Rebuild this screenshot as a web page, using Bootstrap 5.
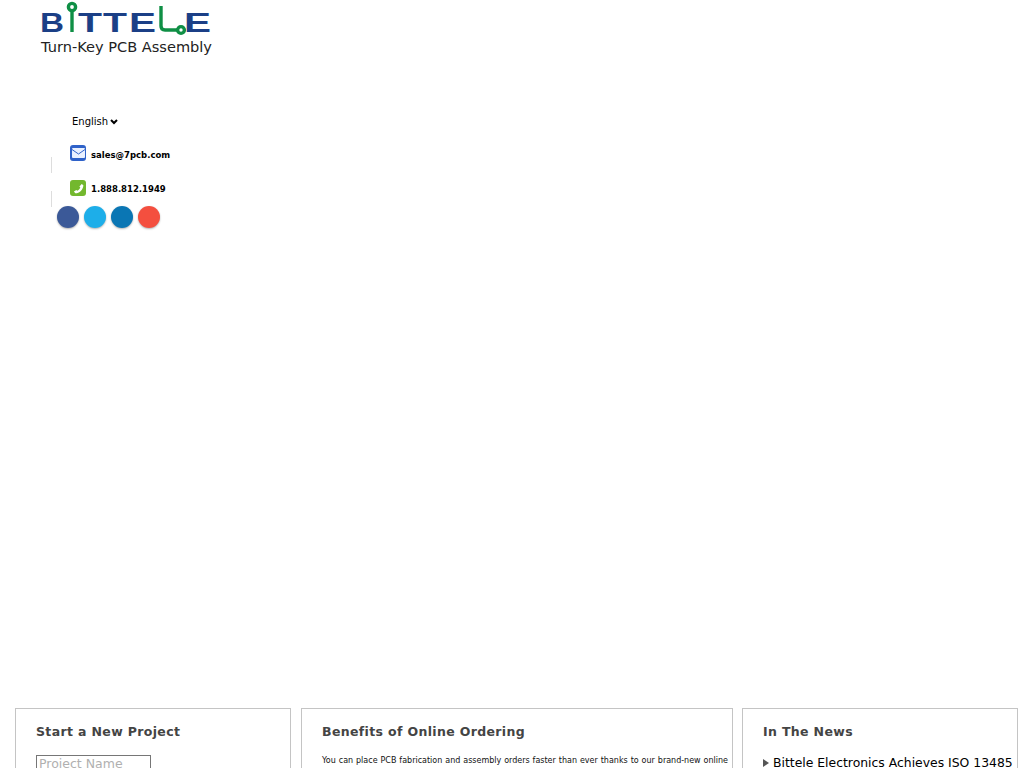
<!DOCTYPE html>
<html lang="en">
  <head>
    <meta charset="UTF-8" />
    <meta name="viewport" content="width=device-width, initial-scale=1.0" />
    <title>Bittele - Turn-Key PCB Assembly</title>
    <link href="https://cdn.jsdelivr.net/npm/bootstrap@5.3.0/dist/css/bootstrap.min.css" rel="stylesheet" />
    <style>
      html, body { height: 768px; overflow: hidden; }
      body { font-family: "DejaVu Sans", sans-serif; color: #000; background: #fff; }
      .site-logo { display: block; margin-left: 36px; width: 180px; height: 60px; }
      .top-info { margin-top: 54px; margin-left: 51px; width: 130px; height: 594px; }
      .lang-pick { margin-left: 21px; height: 16px; font-size: 10px; line-height: 16px; gap: 2px; }
      .contact-line { height: 34px; padding-top: 1px; padding-left: 19px; font-weight: 700; font-size: 8.5px; position: relative; gap: 5px; }
      .contact-line::before { content: ""; position: absolute; left: 0; top: 19px; height: 16px; border-left: 1px solid #ddd; }
      .contact-ico { width: 16px; height: 16px; border-radius: 3px; flex: none; }
      .ico-mail { background: #2f62c9; margin-bottom: 5px; }
      .ico-phone { background: #73b82e; margin-bottom: 3px; }
      .social-row { margin-left: 6px; gap: 5px; }
      .social-dot { width: 22px; height: 22px; border-radius: 50%; box-shadow: 0 1px 2px rgba(0,0,0,.3); }
      .panels { padding: 0 6px 0 15px; }
      .panel-box { border: 1px solid #c4c4c4; border-bottom: 0; padding: 14px 20px 0; height: 300px; background: #fff; }
      .panel-a { width: 276px; margin-right: 10px; }
      .panel-b { width: 432px; margin-right: 9px; padding-right: 4px; }
      .panel-c { width: 276px; padding-right: 0; }
      .panel-title { font-size: 12.5px; font-weight: 700; color: #444; letter-spacing: .35px; line-height: 18px; margin: 0 0 14px; }
      .proj-input { display: block; width: 115px; height: 22px; padding: 0 2px 6px; border: 1px solid #767676; font-size: 12.5px; font-family: "DejaVu Sans", sans-serif; border-radius: 0; }
      .proj-input::placeholder { color: #b0b0b0; }
      .benefit-text { font-size: 8px; line-height: 14px; text-align: justify; text-align-last: justify; margin: -1px 0 0; color: #111; }
      .news-line { font-size: 12.4px; line-height: 16px; white-space: nowrap; }
      .news-arrow { display: inline-block; border-left: 6px solid #555; border-top: 4px solid transparent; border-bottom: 4px solid transparent; margin-right: 4px; }
    </style>
  </head>
  <body>
    <svg class="site-logo" viewBox="36 0 180 60" role="img" aria-label="Bittele">
      <g font-family="Liberation Sans, sans-serif" font-weight="700" font-size="27" fill="#1b3f86">
        <text x="40" y="32" textLength="24" lengthAdjust="spacingAndGlyphs">B</text>
        <text x="78" y="32" textLength="24" lengthAdjust="spacingAndGlyphs">T</text>
        <text x="103" y="32" textLength="24" lengthAdjust="spacingAndGlyphs">T</text>
        <text x="129" y="32" textLength="27" lengthAdjust="spacingAndGlyphs">E</text>
        <text x="184" y="32" textLength="27" lengthAdjust="spacingAndGlyphs">E</text>
      </g>
      <g stroke="#0f8f45" fill="none" stroke-width="3.4">
        <circle cx="72" cy="7" r="3.6" />
        <path d="M72 11V32" />
        <path d="M161 6V26q0 4 4 4h12" />
        <circle cx="181" cy="30" r="3.4" />
      </g>
      <text x="41" y="52" font-family="DejaVu Sans, sans-serif" font-size="13.5" fill="#222" textLength="171" lengthAdjust="spacingAndGlyphs">Turn-Key PCB Assembly</text>
    </svg>

    <div class="top-info">
      <div class="lang-pick d-flex align-items-center">
        English
        <svg width="8" height="6" viewBox="0 0 8 6"><path d="M1 1l3 3 3-3" fill="none" stroke="#000" stroke-width="2" /></svg>
      </div>
      <div class="contact-line d-flex align-items-center mt-2">
        <span class="contact-ico ico-mail d-flex align-items-center justify-content-center">
          <svg width="13" height="10" viewBox="0 0 13 10"><rect width="13" height="10" rx="1" fill="#eaf1ff" /><path d="M0 1.5l6.5 4.5 6.5-4.5" fill="none" stroke="#2f62c9" /></svg>
        </span>
        sales@7pcb.com
      </div>
      <div class="contact-line d-flex align-items-center">
        <span class="contact-ico ico-phone d-flex align-items-center justify-content-center">
          <svg width="11" height="11" viewBox="0 0 12 12"><path d="M9.5 1l1.8 1.4C11.3 7 7 11.3 2.5 11.3L1 9.3l2.6-1.8 1 1c1.4-.7 2.8-2.2 3.4-3.6l-1-1z" fill="#fff" /></svg>
        </span>
        1.888.812.1949
      </div>
      <div class="d-flex social-row">
        <span class="social-dot" style="background:#3b5998"></span>
        <span class="social-dot" style="background:#1daee9"></span>
        <span class="social-dot" style="background:#0a76b4"></span>
        <span class="social-dot" style="background:#f44f3f"></span>
      </div>
    </div>

    <div class="panels d-flex">
      <div class="panel-box panel-a">
        <h2 class="panel-title">Start a New Project</h2>
        <input class="proj-input" type="text" placeholder="Project Name" />
      </div>
      <div class="panel-box panel-b">
        <h2 class="panel-title">Benefits of Online Ordering</h2>
        <p class="benefit-text">You can place PCB fabrication and assembly orders faster than ever thanks to our brand-new online</p>
      </div>
      <div class="panel-box panel-c">
        <h2 class="panel-title">In The News</h2>
        <div class="news-line"><span class="news-arrow"></span>Bittele Electronics Achieves ISO 13485</div>
      </div>
    </div>

    <script src="https://cdn.jsdelivr.net/npm/bootstrap@5.3.0/dist/js/bootstrap.bundle.min.js"></script>
  </body>
</html>
